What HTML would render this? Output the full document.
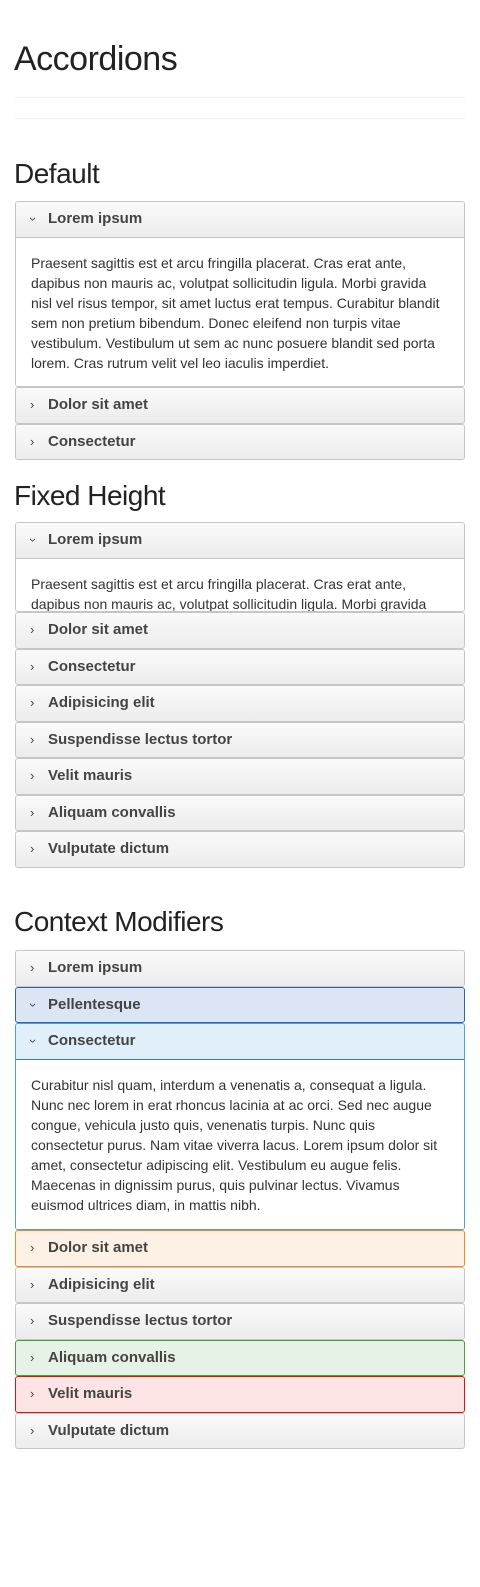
<!DOCTYPE html>
<html><head><style>
*{box-sizing:border-box;margin:0;padding:0}
body{width:480px;height:1587px;background:#fff;font-family:"Liberation Sans",Arial,sans-serif;color:#333;position:relative}
h1{position:absolute;left:14px;top:40px;font-size:34px;font-weight:300;color:#222;letter-spacing:-0.5px}
.hr{position:absolute;left:15px;width:450px;height:1px;background:#eee}
h2{position:absolute;left:14px;font-size:28px;font-weight:300;color:#222;letter-spacing:-0.5px}
.acc{position:absolute;left:15px;width:450px}
.p{border:1px solid #c6c6c6;border-radius:3px;height:36.5px;background:linear-gradient(#fafafa,#ececec);font-weight:bold;font-size:15px;color:#444;line-height:34px;padding-left:32px;position:relative}
.p:before{content:"›";position:absolute;left:14px;top:0;font-size:13px;color:#444;font-weight:normal}
.p.o:before{content:"›";transform:rotate(90deg);left:15px;top:1px;line-height:32px}
.open{border:1px solid #c6c6c6;border-radius:3px;overflow:hidden}
.open .p{border:none;border-bottom:1px solid #c6c6c6;border-radius:0;height:36px}
.b{padding:15px 15px 14px 15px;font-size:14px;line-height:20px;color:#333;background:#fff}
.blue{background:#dbe5f3;border-color:#2a67b0}
.info{border-color:#4aa3de}
.info .p{background:#e0effa;border-bottom-color:#3a7ac0}
.warn{background:#fdf1e5;border-color:#ef8a22}
.ok{background:#e7f2e6;border-color:#4a9e3e}
.err{background:#fde4e4;border-color:#d11}
</style></head><body>
<h1>Accordions</h1>
<div class="hr" style="top:97px"></div>
<div class="hr" style="top:118px"></div>

<h2 style="top:158px">Default</h2>
<div class="acc" style="top:201px">
<div class="open" style="height:186px"><div class="p o">Lorem ipsum</div><div class="b">Praesent sagittis est et arcu fringilla placerat. Cras erat ante, dapibus non mauris ac, volutpat sollicitudin ligula. Morbi gravida nisl vel risus tempor, sit amet luctus erat tempus. Curabitur blandit sem non pretium bibendum. Donec eleifend non turpis vitae vestibulum. Vestibulum ut sem ac nunc posuere blandit sed porta lorem. Cras rutrum velit vel leo iaculis imperdiet.</div></div>
<div class="p">Dolor sit amet</div>
<div class="p">Consectetur</div>
</div>

<h2 style="top:480px">Fixed Height</h2>
<div class="acc" style="top:522px">
<div class="open" style="height:90px"><div class="p o">Lorem ipsum</div><div class="b">Praesent sagittis est et arcu fringilla placerat. Cras erat ante, dapibus non mauris ac, volutpat sollicitudin ligula. Morbi gravida nisl vel risus tempor, sit amet luctus erat tempus.</div></div>
<div class="p">Dolor sit amet</div>
<div class="p">Consectetur</div>
<div class="p">Adipisicing elit</div>
<div class="p">Suspendisse lectus tortor</div>
<div class="p">Velit mauris</div>
<div class="p">Aliquam convallis</div>
<div class="p">Vulputate dictum</div>
</div>

<h2 style="top:906px">Context Modifiers</h2>
<div class="acc" style="top:950px">
<div class="p">Lorem ipsum</div>
<div class="p o blue">Pellentesque</div>
<div class="open info" style="height:207px"><div class="p o">Consectetur</div><div class="b">Curabitur nisl quam, interdum a venenatis a, consequat a ligula. Nunc nec lorem in erat rhoncus lacinia at ac orci. Sed nec augue congue, vehicula justo quis, venenatis turpis. Nunc quis consectetur purus. Nam vitae viverra lacus. Lorem ipsum dolor sit amet, consectetur adipiscing elit. Vestibulum eu augue felis. Maecenas in dignissim purus, quis pulvinar lectus. Vivamus euismod ultrices diam, in mattis nibh.</div></div>
<div class="p warn">Dolor sit amet</div>
<div class="p">Adipisicing elit</div>
<div class="p">Suspendisse lectus tortor</div>
<div class="p ok">Aliquam convallis</div>
<div class="p err">Velit mauris</div>
<div class="p">Vulputate dictum</div>
</div>
</body></html>
